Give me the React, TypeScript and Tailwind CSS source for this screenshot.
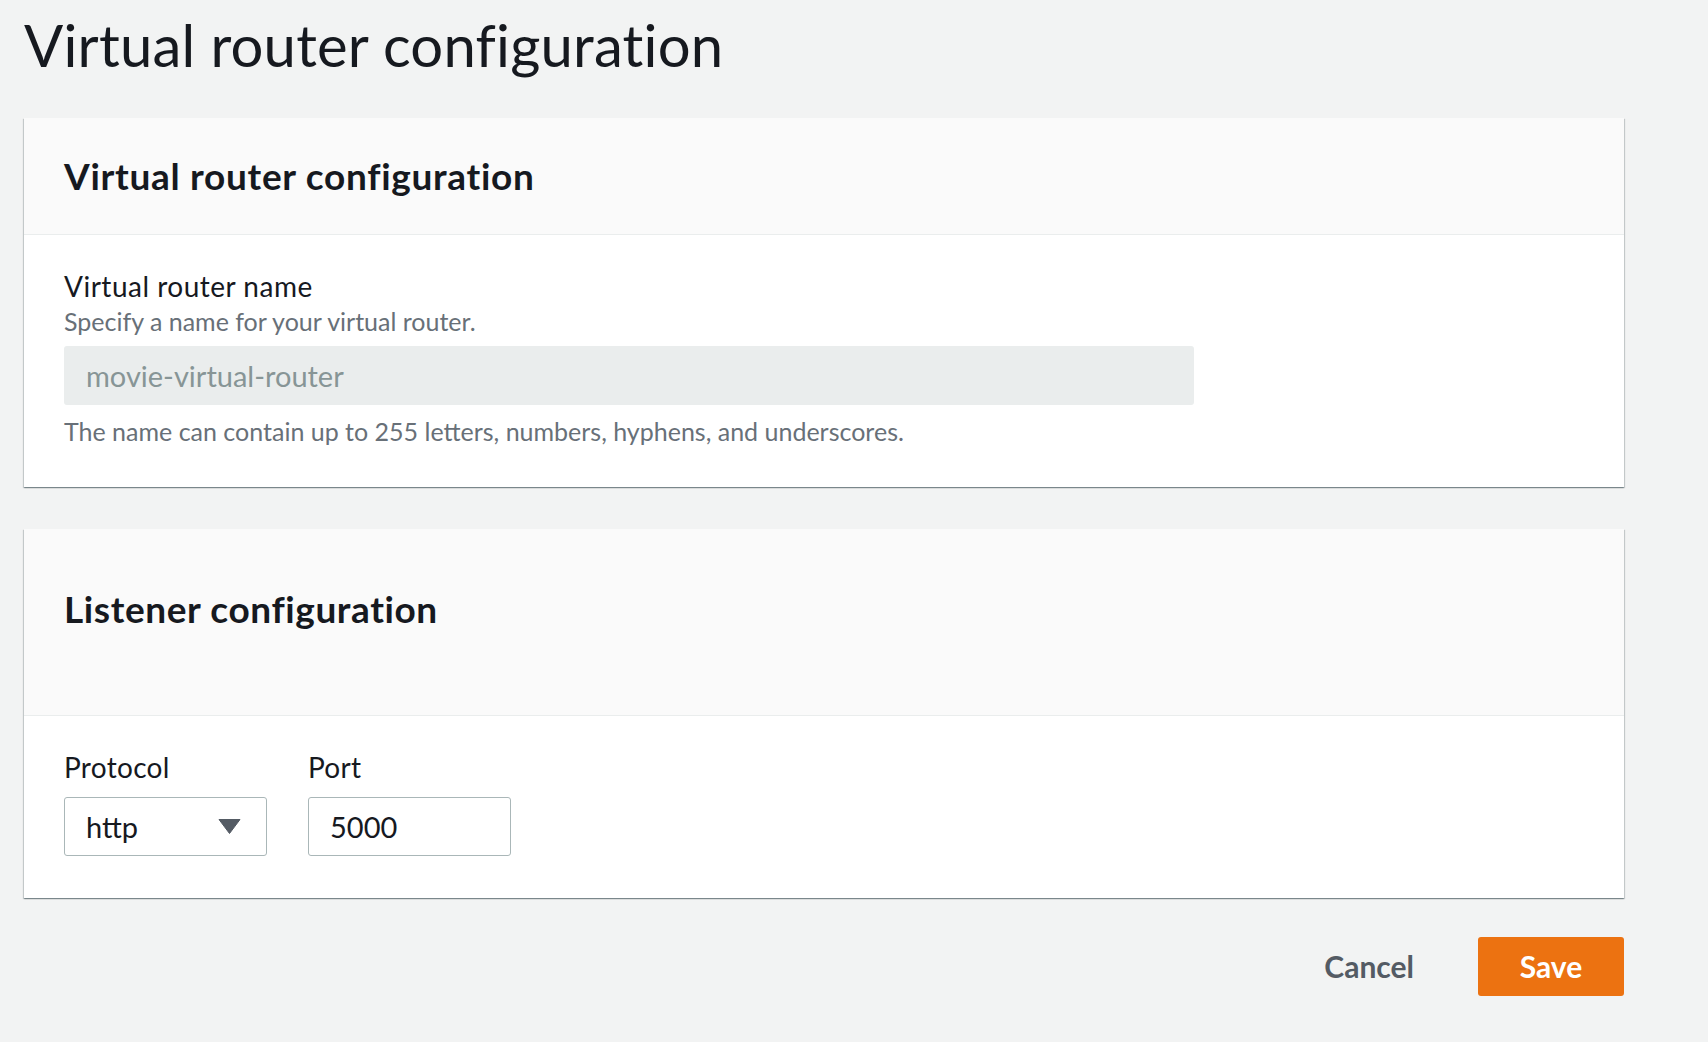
import React from "react";

const font = { fontFamily: "Lato, 'Open Sans', sans-serif" };

export default function App() {
  return (
    <div
      className="min-h-[1042px] w-full bg-[#f2f3f3] text-[#16191f]"
      style={font}
    >
      <div className="w-[1600px] pl-[24px] pt-[13px] box-content">
        <h1 className="text-[58px] leading-[64px] font-normal text-[#16191f] tracking-[0.2px]">
          Virtual router configuration
        </h1>

        {/* Card 1 */}
        <section className="mt-[41px] bg-white shadow-[0_1px_1px_0_rgba(0,28,36,0.3),1px_1px_1px_0_rgba(0,28,36,0.15),-1px_1px_1px_0_rgba(0,28,36,0.15)]">
          <div className="bg-[#fafafa] border-b border-[#eaeded] px-[40px] pt-[36px] pb-[36px]">
            <h2 className="text-[37px] leading-[44px] font-bold text-[#16191f] tracking-[0.7px]">
              Virtual router configuration
            </h2>
          </div>
          <div className="px-[40px] pt-[35px] pb-[41px]">
            <div className="text-[28px] leading-[33px] text-[#16191f] tracking-[0.5px]">
              Virtual router name
            </div>
            <div className="mt-[3px] text-[25px] leading-[30px] text-[#687078]">
              Specify a name for your virtual router.
            </div>
            <div className="mt-[10px] w-[1130px] h-[59px] rounded-[3px] bg-[#eaeded] flex items-center pl-[22px] text-[29px] text-[#879596]">
              movie-virtual-router
            </div>
            <div className="mt-[11px] text-[25px] leading-[30px] text-[#687078]">
              The name can contain up to 255 letters, numbers, hyphens, and underscores.
            </div>
          </div>
        </section>

        {/* Card 2 */}
        <section className="mt-[42px] bg-white shadow-[0_1px_1px_0_rgba(0,28,36,0.3),1px_1px_1px_0_rgba(0,28,36,0.15),-1px_1px_1px_0_rgba(0,28,36,0.15)]">
          <div className="bg-[#fafafa] border-b border-[#eaeded] px-[40px] pt-[58px] pb-[84px]">
            <h2 className="text-[37px] leading-[44px] font-bold text-[#16191f] tracking-[0.6px]">
              Listener configuration
            </h2>
          </div>
          <div className="px-[40px] pt-[35px] pb-[42px] flex gap-[41px]">
            <div className="flex flex-col">
              <div className="text-[28px] leading-[33px] text-[#16191f] tracking-[0.3px]">Protocol</div>
              <div className="mt-[13px] w-[203px] h-[59px] rounded-[3px] border border-[#aab7b8] bg-white flex items-center justify-between pl-[21px] pr-[25px] text-[29px] text-[#16191f]">
                <span>http</span>
                <svg width="23" height="15" viewBox="0 0 23 15">
                  <polygon points="1,0.5 22,0.5 11.5,14.5" fill="#545b64" stroke="#545b64" strokeWidth="1" strokeLinejoin="round" />
                </svg>
              </div>
            </div>
            <div className="flex flex-col">
              <div className="text-[28px] leading-[33px] text-[#16191f] tracking-[0.3px]">Port</div>
              <div className="mt-[13px] w-[203px] h-[59px] rounded-[3px] border border-[#aab7b8] bg-white flex items-center pl-[21px] text-[29px] text-[#16191f]">
                5000
              </div>
            </div>
          </div>
        </section>

        {/* Actions */}
        <div className="mt-[39px] flex justify-end items-center gap-[64px]">
          <button className="text-[30px] font-bold text-[#545b64]">Cancel</button>
          <button className="w-[146px] h-[59px] rounded-[3px] bg-[#ec7211] text-white text-[30px] font-bold flex items-center justify-center">
            Save
          </button>
        </div>
      </div>
    </div>
  );
}
